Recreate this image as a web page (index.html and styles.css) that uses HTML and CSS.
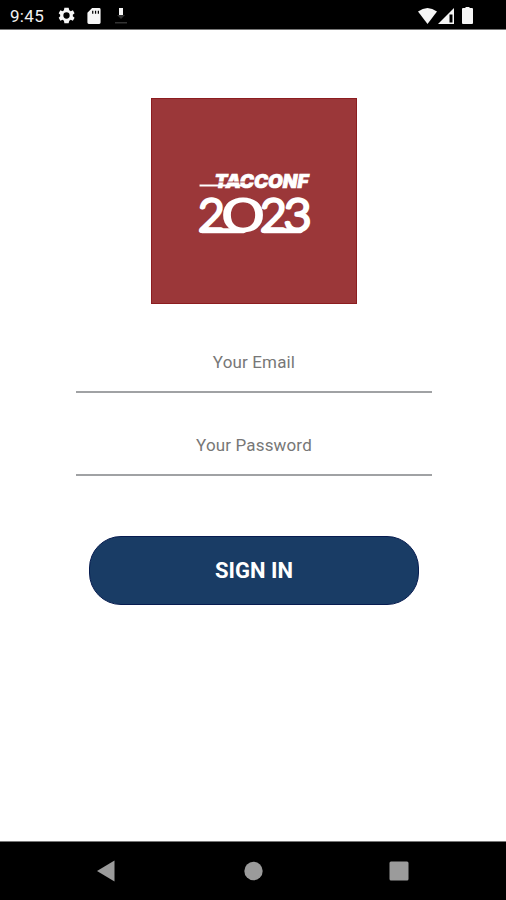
FILE: index.html
```html
<!DOCTYPE html>
<html lang="en">
<head>
<meta charset="utf-8">
<title>TACCONF 2023</title>
<link rel="stylesheet" href="styles.css">
</head>
<body>
<header class="status">
  <span class="time">9:45</span>
  <svg class="gear" viewBox="2 2 20 20"><path fill-rule="evenodd" d="M19.400 13c.1-.6.1-1.400 0-2l2.100-1.600-2-3.500-2.500 1a7 7 0 0 0-1.700-1L14.500 3h-5L9 5.900a7 7 0 0 0-1.700 1l-2.500-1-2 3.500L4.600 11c-.1.600-.1 1.400 0 2l-1.800 1.600 2 3.500 2.500-1a7 7 0 0 0 1.700 1L9.500 21h5l.8-2.900a7 7 0 0 0 1.700-1l2.500 1 2-3.500zM12 8.300a3.700 3.700 0 1 1 0 7.400 3.700 3.700 0 0 1 0-7.400z"/></svg>
  <svg class="card" viewBox="0 0 14 17"><path fill-rule="evenodd" d="M5 0h7.500Q14 0 14 1.500v14Q14 17 12.500 17h-11Q0 17 0 15.500V5zM5 3v3h1.300V3zm3 0v3h1.300V3zm3 0v3h1.300V3z"/></svg>
  <svg class="download" viewBox="0 0 14 18"><path d="M5 1h4v7H5z"/><path class="dim" d="M3 8h8l-4 4zM1 15h12v1.500H1z"/></svg>
  <span class="spacer"></span>
  <svg class="wifi" viewBox="0 0 19 16"><path d="M0 3.500Q9.500-3.500 19 3.500L9.500 16z"/></svg>
  <svg class="signal" viewBox="0 0 16 16"><path fill-rule="evenodd" d="M16 0v16H0zM11.500 6.500v8h3v-8z"/></svg>
  <svg class="battery" viewBox="0 0 11 17"><path d="M3.500 0h4v1H10q1 0 1 1v14q0 1-1 1H1q-1 0-1-1V2q0-1 1-1h2.500z"/></svg>
</header>
<main class="login">
  <svg class="logo" viewBox="151 98 206 206" role="img" aria-label="TACCONF 2023">
    <path class="speed" d="M199 185.300h43"/>
    <text class="brand" x="214" y="188" textLength="95" lengthAdjust="spacingAndGlyphs">TACCONF</text>
    <path class="slice" d="M217 181.800h32"/>
    <text class="year" y="231.500"><tspan x="197.500" textLength="27" lengthAdjust="spacingAndGlyphs">2</tspan><tspan class="zero" x="222.500" textLength="41" lengthAdjust="spacingAndGlyphs">0</tspan><tspan x="260" textLength="27" lengthAdjust="spacingAndGlyphs">2</tspan><tspan x="284" textLength="28" lengthAdjust="spacingAndGlyphs">3</tspan></text>
    <path class="base" d="M201.500 231h42M264 231h37"/>
  </svg>
  <form class="form">
    <input class="field" type="email" placeholder="Your Email" aria-label="Your Email">
    <input class="field" type="password" placeholder="Your Password" aria-label="Your Password">
    <button class="submit" type="button">SIGN IN</button>
  </form>
</main>
<nav class="nav">
  <svg viewBox="0 0 22 22"><path d="M19.500.5v21L2 11z"/></svg>
  <svg viewBox="0 0 22 22"><circle cx="11.500" cy="11" r="9.200"/></svg>
  <svg viewBox="0 0 22 22"><rect x="1.500" y="1.500" width="19" height="19" rx="1.500"/></svg>
</nav>
</body>
</html>
```
FILE: styles.css
```css
* { box-sizing: border-box; }
body {
  margin: 0;
  height: 900px;
  display: flex;
  flex-direction: column;
  background: #fff;
  font-family: Roboto, "Liberation Sans", sans-serif;
  overflow: hidden;
}
.status {
  height: 30px;
  flex: none;
  display: flex;
  align-items: center;
  padding: 2px 33px 0 10px;
  background: #000;
  border-bottom: 1px solid #777;
  color: #f2f2f2;
  fill: #f6f6f6;
}
.time { width: 48px; font-size: 17px; line-height: 28px; letter-spacing: .3px; }
.gear { width: 17px; height: 17px; }
.card { width: 14px; height: 16px; margin-left: 12px; }
.download { width: 14px; height: 18px; margin-left: 13px; }
.dim { fill: #333; }
.spacer { flex: 1; }
.wifi { width: 19px; height: 16px; }
.signal { width: 16px; height: 16px; margin-left: 1px; }
.battery { width: 11px; height: 17px; margin-left: 8px; }
.login {
  flex: 1;
  display: flex;
  flex-direction: column;
  align-items: center;
  padding: 68px 0 0 2px;
}
.logo { width: 206px; height: 206px; flex: none; background: #9b3739; border: 1px solid #8c1d20; }
.brand { font: italic 900 18.500px Inter, sans-serif; fill: #fff; stroke: #fff; stroke-width: .7px; }
.year { font: 300 46px Lato, sans-serif; fill: #fff; stroke: #fff; stroke-width: 3.400px; stroke-linejoin: round; }
.zero { stroke-width: 2.800px; }
.speed { stroke: #fff; stroke-width: 2px; }
.slice { stroke: #9b3739; stroke-width: .8px; }
.base { stroke: #fff; stroke-width: 5px; stroke-linecap: round; }
.form { width: 356px; display: flex; flex-direction: column; align-items: center; padding-top: 29px; }
.field {
  width: 356px;
  height: 60px;
  margin: 0 0 23px;
  padding: 0 0 1px;
  border: 0;
  border-bottom: 2px solid #a0a2a4;
  background: none;
  text-align: center;
  font: 400 17px Roboto, sans-serif;
  letter-spacing: .15px;
  color: #333;
  outline: 0;
}
.field::placeholder { color: #777; opacity: 1; }
.submit {
  width: 330px;
  height: 69px;
  margin-top: 37px;
  border: 1px solid #071c50;
  border-radius: 32px;
  background: #193c65;
  color: #fff;
  font: 700 22px Roboto, sans-serif;
}
.nav {
  height: 59px;
  flex: none;
  display: flex;
  justify-content: space-between;
  align-items: center;
  padding: 0 96px 0 95px;
  background: #000;
  border-top: 1px solid #777;
}
.nav svg { width: 22px; height: 22px; fill: #9b9b9b; }
```
